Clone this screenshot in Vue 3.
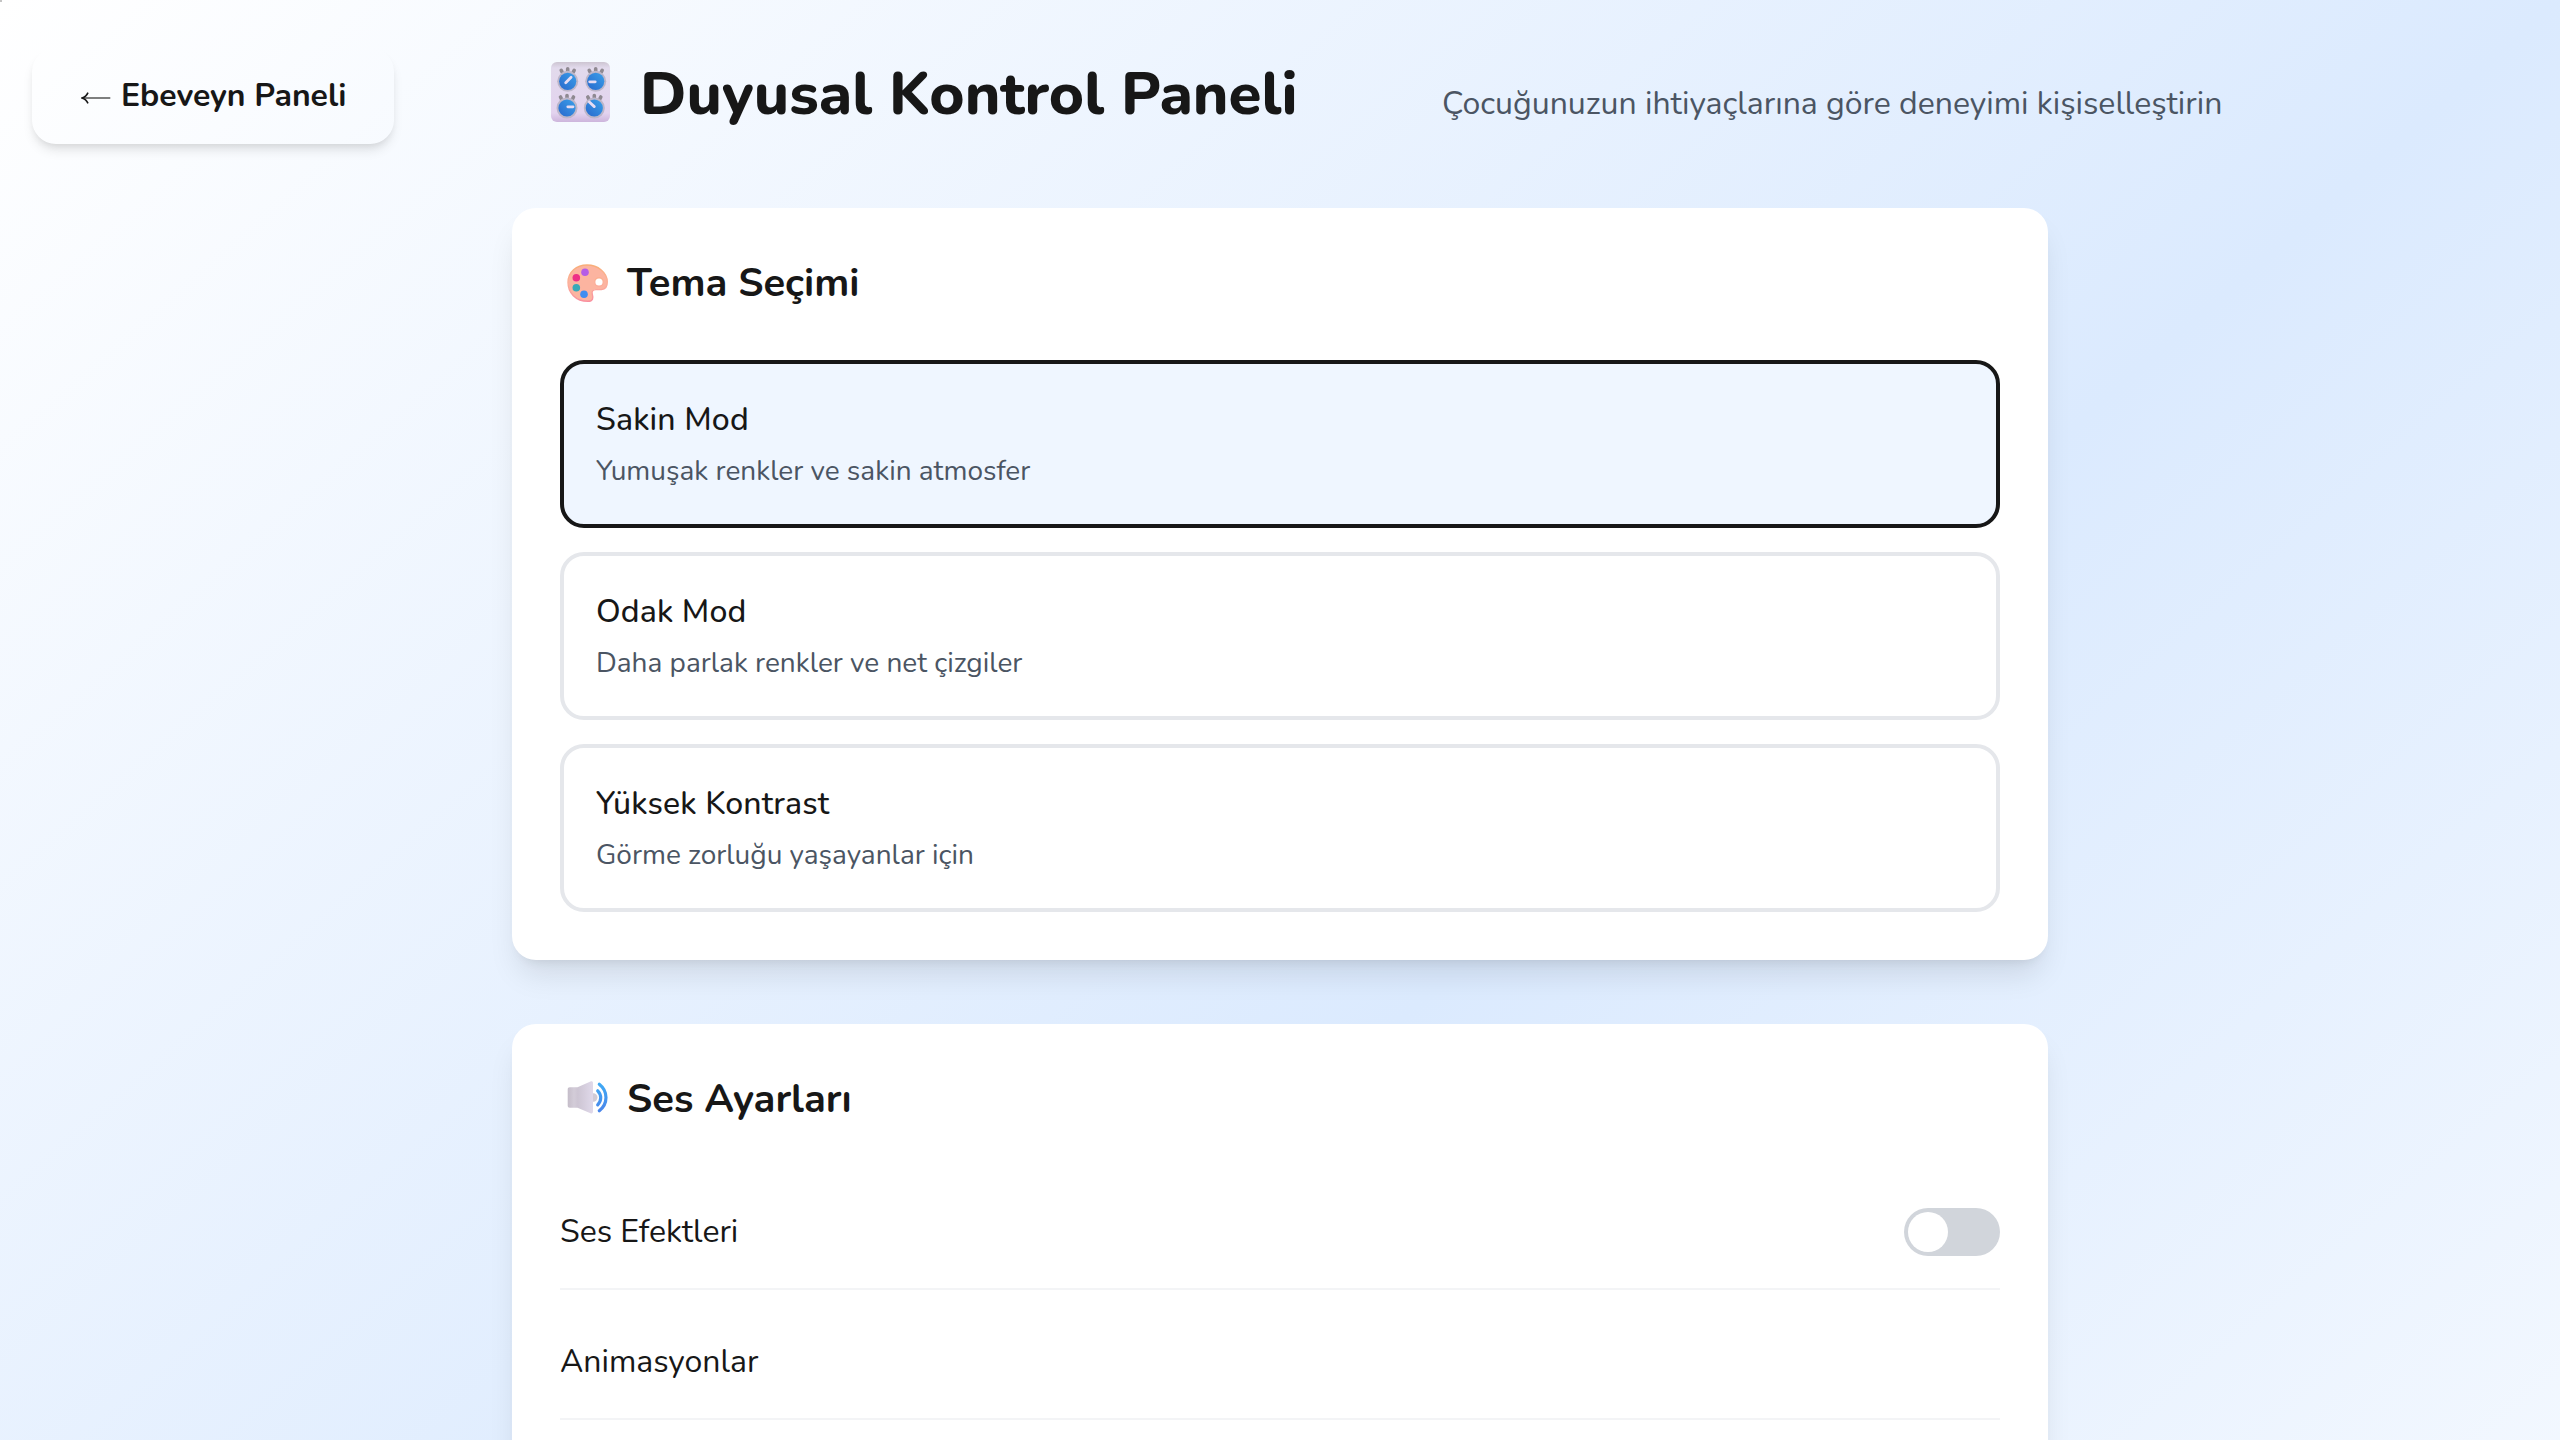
<script setup>
import { ref } from 'vue'

const selected = ref('calm')
const themes = [
  { id: 'calm', name: 'Sakin Mod', text: 'Yumuşak renkler ve sakin atmosfer' },
  { id: 'focus', name: 'Odak Mod', text: 'Daha parlak renkler ve net çizgiler' },
  { id: 'contrast', name: 'Yüksek Kontrast', text: 'Görme zorluğu yaşayanlar için' },
]

const knobs = [
  { x: 16.7, y: 19.3, line: 'M-2 1.4 3.4-4' },
  { x: 44.7, y: 19.3, line: 'M-6 .5H-.5' },
  { x: 16, y: 46, line: 'M.8-1.2H6' },
  { x: 43.3, y: 46, line: 'M-5-6 0-1.4' },
]
</script>

<template>
  <div class="page">
    <i class="corner"></i>
    <header class="header">
      <button class="back">
        <svg class="arrow" width="30" height="14" viewBox="0 0 30 14" fill="none">
          <path d="M2 7H29.3" stroke="#555" stroke-width="1.5" />
          <path d="M7 1.6C5.8 4.3 4 6.2 1 7c3 .8 4.800 2.700 6 5.400" stroke="#171717" stroke-width="1.6" />
        </svg>
        <span>Ebeveyn Paneli</span>
      </button>
      <svg class="panel-icon" width="60" height="60" viewBox="0 0 60 60">
        <defs>
          <linearGradient id="panel" x1="0" y1="0" x2="0" y2="1">
            <stop offset="0" stop-color="#cdc5d1" />
            <stop offset=".1" stop-color="#e2daec" />
            <stop offset=".85" stop-color="#e3d3ef" />
            <stop offset="1" stop-color="#cdb5dc" />
          </linearGradient>
          <linearGradient id="knob" x1="1" y1="0" x2="0" y2="1">
            <stop offset="0" stop-color="#3ba0ea" />
            <stop offset="1" stop-color="#2868cc" />
          </linearGradient>
        </defs>
        <rect width="59" height="60" rx="6" fill="url(#panel)" />
        <g v-for="(k, i) in knobs" :key="i" :transform="`translate(${k.x} ${k.y})`">
          <path d="M-6.500-11-5.500-9M0-12.500v2M6.500-11 5.500-9" stroke="#8f8991" stroke-width="3.600" stroke-linecap="round" />
          <circle r="10.500" fill="#bdb6c9" />
          <circle r="8.600" fill="url(#knob)" />
          <path :d="k.line" stroke="#e6dcf3" stroke-width="2.800" stroke-linecap="round" />
        </g>
      </svg>
      <h1>Duyusal Kontrol Paneli</h1>
      <p class="subtitle">Çocuğunuzun ihtiyaçlarına göre deneyimi kişiselleştirin</p>
    </header>

    <main class="content">
      <section class="card">
        <h2>
          <svg width="56" height="54" viewBox="0 0 56 54">
            <defs>
              <linearGradient id="palette" x1="0" y1="0" x2="0" y2="1">
                <stop offset="0" stop-color="#f8ad78" />
                <stop offset=".5" stop-color="#fcb09a" />
                <stop offset="1" stop-color="#f98f9f" />
              </linearGradient>
            </defs>
            <path
              fill="#fcb4a0" fill-rule="evenodd" stroke="url(#palette)" stroke-width="1.400"
              d="M27 9C38 9 47.300 16.500 47.300 26c0 4.500-2 7.300-5.800 7.600H36c-3.300 0-4.500 2-3.700 4.600C33.500 42 33 45.300 28 45.300 15.500 45.300 8 36.500 8 26.500 8 16 16.500 9 27 9Zm12 12.700a4.300 4.300 0 1 0 0 8.600 4.300 4.300 0 1 0 0-8.600Z"
            />
            <circle cx="25" cy="16.300" r="3.800" fill="#b45ce6" />
            <circle cx="16.300" cy="21.800" r="3.800" fill="#ee2f86" />
            <circle cx="16.300" cy="31.800" r="3.800" fill="#38a9b8" />
            <circle cx="24" cy="38.300" r="3.800" fill="#3f8df0" />
          </svg>
          <span>Tema Seçimi</span>
        </h2>
        <div class="options">
          <button
            v-for="t in themes" :key="t.id"
            class="option" :class="{ active: selected === t.id }"
            @click="selected = t.id"
          >
            <span class="name">{{ t.name }}</span>
            <span class="desc">{{ t.text }}</span>
          </button>
        </div>
      </section>

      <section class="card">
        <h2>
          <svg width="56" height="54" viewBox="0 0 56 54">
            <defs>
              <linearGradient id="cone" x1="0" y1="0" x2="1" y2="0">
                <stop offset="0" stop-color="#c5bdc9" />
                <stop offset=".25" stop-color="#d3ccd8" />
                <stop offset=".4" stop-color="#cdc5d3" />
                <stop offset="1" stop-color="#e0d9ea" />
              </linearGradient>
              <linearGradient id="wave" x1="0" y1="0" x2="0" y2="1">
                <stop offset="0" stop-color="#3fa9f4" />
                <stop offset="1" stop-color="#4a86ea" />
              </linearGradient>
            </defs>
            <circle cx="33.300" cy="25.500" r="4.200" fill="#d0cbd6" />
            <path fill="url(#cone)" d="M9.700 15.300h7.800L30.500 9.400c1.500-.5 2.500.2 2.500 1.600v28.600c0 1.500-1 2.200-2.500 1.600L17.500 35.700H9.700c-1.200 0-2-.8-2-2V17.300c0-1.200.8-2 2-2Z" />
            <path fill="none" stroke="url(#wave)" stroke-width="3.200" stroke-linecap="round" d="M37.700 18.800c4 4 4 10 0 14M39.300 12.300c8.900 7 8.900 19.500 0 26.500" />
          </svg>
          <span>Ses Ayarları</span>
        </h2>
        <div class="rows">
          <div class="row">
            <span>Ses Efektleri</span>
            <button class="toggle"><i></i></button>
          </div>
          <div class="row">
            <span>Animasyonlar</span>
          </div>
        </div>
      </section>
    </main>
  </div>
</template>

<style>
html,
body {
  margin: 0;
  overflow: hidden;
}
</style>

<style scoped>
.page {
  position: relative;
  width: 2560px;
  height: 1440px;
  overflow: hidden;
  background: linear-gradient(to bottom right, #fff, #dbeafe 50%, #fff) 0 0 / 2560px 2250px no-repeat;
  color: #171717;
  font-family: Nunito, Lato, sans-serif;
}
.corner {
  position: absolute;
  left: 0;
  top: 0;
  width: 2px;
  height: 2px;
  background: #c4c4c4;
}
button {
  margin: 0;
  border: 0;
  background: none;
  color: inherit;
  font-family: inherit;
  text-align: left;
}
.header {
  box-sizing: border-box;
  display: flex;
  align-items: flex-start;
  height: 208px;
  padding: 48px 32px 0;
  white-space: nowrap;
}
.back {
  box-sizing: border-box;
  display: flex;
  align-items: center;
  gap: 10px;
  width: 362px;
  height: 96px;
  padding: 0 48px;
  border-radius: 24px;
  box-shadow: 0 8px 12px -2px rgba(0, 0, 0, 0.1), 0 4px 8px -4px rgba(0, 0, 0, 0.1);
  font-size: 32px;
  font-weight: 700;
  line-height: 48px;
}
.arrow {
  flex: none;
  margin: 4px 0 0 1px;
}
.back span {
  margin-top: -1px;
}
.panel-icon {
  flex: none;
  margin: 14px 0 0 157px;
}
h1 {
  width: 659px;
  margin: 11px 0 0 29px;
  font-size: 60px;
  font-weight: 800;
  line-height: 70px;
}
.subtitle {
  margin: 32px 0 0 143px;
  color: #4b5563;
  font-size: 32px;
  line-height: 48px;
}
.content {
  display: flex;
  flex-direction: column;
  gap: 64px;
  width: 1536px;
  margin: 0 auto;
}
.card {
  padding: 48px;
  border-radius: 24px;
  background: #fff;
  box-shadow: 0 20px 30px -6px rgba(0, 0, 0, 0.1), 0 8px 12px -8px rgba(0, 0, 0, 0.1);
}
h2 {
  display: flex;
  gap: 11px;
  margin: 0 0 50px;
  font-size: 40px;
  font-weight: 700;
  line-height: 54px;
}
.options {
  display: flex;
  flex-direction: column;
  gap: 24px;
}
.option {
  display: flex;
  flex-direction: column;
  gap: 6px;
  padding: 32px;
  border: 4px solid #e5e7eb;
  border-radius: 24px;
}
.option.active {
  border-color: #171717;
  background: #eff6ff;
}
.name {
  font-size: 32px;
  font-weight: 500;
  line-height: 48px;
  letter-spacing: 0.15px;
}
.desc {
  color: #4b5563;
  font-size: 28px;
  line-height: 42px;
}
.rows {
  display: flex;
  flex-direction: column;
  gap: 16px;
  height: 600px;
}
.row {
  display: flex;
  align-items: center;
  justify-content: space-between;
  height: 112px;
  border-bottom: 2px solid #f3f4f6;
  font-size: 32px;
}
.row span {
  margin-top: -2px;
}
.toggle {
  width: 96px;
  height: 48px;
  padding: 4px;
  border-radius: 24px;
  background: #d1d5db;
}
.toggle i {
  display: block;
  width: 40px;
  height: 40px;
  border-radius: 50%;
  background: #fff;
}
</style>
